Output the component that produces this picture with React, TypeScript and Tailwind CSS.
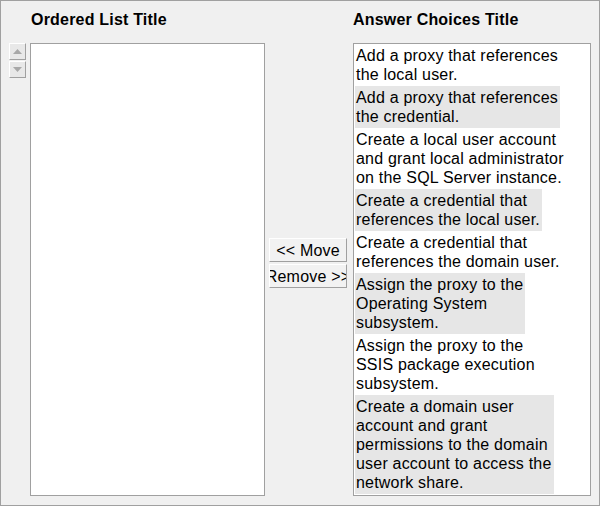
import React from 'react'

const choices = [
  ['Add a proxy that references', 'the local user.'],
  ['Add a proxy that references', 'the credential.'],
  ['Create a local user account', 'and grant local administrator', 'on the SQL Server instance.'],
  ['Create a credential that', 'references the local user.'],
  ['Create a credential that', 'references the domain user.'],
  ['Assign the proxy to the', 'Operating System', 'subsystem.'],
  ['Assign the proxy to the', 'SSIS package execution', 'subsystem.'],
  ['Create a domain user', 'account and grant', 'permissions to the domain', 'user account to access the', 'network share.'],
]

function Arrow({ down }: { down?: boolean }) {
  return (
    <svg width="9" height="5" viewBox="0 0 9 5" className={down ? 'rotate-180' : ''}>
      <path d="M4.5 0L9 5H0z" fill="#a8a8a8" />
    </svg>
  )
}

export default function App() {
  return (
    <div className="w-[600px] h-[506px] border border-[#a0a0a0] bg-[#f0f0f0] text-black tracking-[0.2px] font-['Liberation_Sans',Arial,sans-serif] flex flex-col">
      <div className="flex h-[42px] pt-[9px] text-[16px] font-bold leading-[19px]">
        <div className="ml-[30px] w-[322px]">Ordered List Title</div>
        <div>Answer Choices Title</div>
      </div>

      <div className="flex h-[453px]">
        <div className="ml-[8px] w-[17px] flex flex-col gap-[1px]">
          <button className="h-[17px] w-[17px] flex items-center justify-center bg-[#e8e8e8] border border-t-white border-l-white border-r-[#a0a0a0] border-b-[#a0a0a0]">
            <Arrow />
          </button>
          <button className="h-[17px] w-[17px] flex items-center justify-center bg-[#e8e8e8] border border-t-white border-l-white border-r-[#a0a0a0] border-b-[#a0a0a0]">
            <Arrow down />
          </button>
        </div>

        <div className="ml-[4px] w-[235px] h-full bg-white border border-[#a0a0a0]" />

        <div className="ml-[4px] w-[78px] flex flex-col gap-[2px] pt-[195px]">
          <button className="h-[24px] w-[78px] overflow-hidden whitespace-nowrap flex justify-center items-center text-[16px] leading-[19px] bg-[#f2f2f2] border border-t-white border-l-white border-r-[#a0a0a0] border-b-[#a0a0a0]">
            &lt;&lt; Move
          </button>
          <button className="h-[24px] w-[78px] overflow-hidden whitespace-nowrap flex justify-center items-center text-[16px] leading-[19px] bg-[#f2f2f2] border border-t-white border-l-white border-r-[#a0a0a0] border-b-[#a0a0a0]">
            Remove &gt;&gt;
          </button>
        </div>

        <div className="ml-[6px] w-[238px] h-full bg-white border border-[#a0a0a0] px-[1px] flex flex-col items-start text-[16px] leading-[19px]">
          {choices.map((lines, i) => (
            <div key={i} className={`whitespace-nowrap pl-[1px] pr-[2px] py-[2px] ${i % 2 === 1 ? 'bg-[#e6e6e6]' : 'bg-white'}`}>
              {lines.map((l, j) => (
                <div key={j}>{l}</div>
              ))}
            </div>
          ))}
        </div>
      </div>
    </div>
  )
}
